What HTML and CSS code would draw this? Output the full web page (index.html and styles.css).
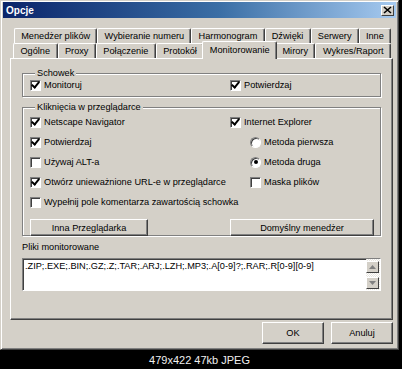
FILE: index.html
```html
<!DOCTYPE html>
<html lang="pl">
<head>
    <meta charset="UTF-8">
    <title>Opcje</title>
    <link rel="stylesheet" href="styles.css">
</head>
<body>
    <div class="frame">
        <div class="dialog">
            <div class="titlebar">
                <span class="title">Opcje</span>
                <span class="close-btn">
                    <svg viewBox="0 0 9 8" width="9" height="8">
                        <path d="M1 1L8 7M8 1L1 7" stroke="#000" stroke-width="1.6" />
                    </svg>
                </span>
            </div>

            <div class="content">
                <div class="tabs">
                    <div class="tab-row back">
                        <div class="tab">Menedżer plików</div>
                        <div class="tab">Wybieranie numeru</div>
                        <div class="tab">Harmonogram</div>
                        <div class="tab">Dźwięki</div>
                        <div class="tab">Serwery</div>
                        <div class="tab">Inne</div>
                    </div>
                    <div class="tab-row front">
                        <div class="tab">Ogólne</div>
                        <div class="tab">Proxy</div>
                        <div class="tab">Połączenie</div>
                        <div class="tab">Protokół</div>
                        <div class="tab active">Monitorowanie</div>
                        <div class="tab">Mirory</div>
                        <div class="tab">Wykres/Raport</div>
                    </div>
                </div>

                <div class="panel">
                    <fieldset class="group clipboard">
                        <legend>Schowek</legend>
                        <div class="grid">
                            <label class="check"><span class="cb checked"></span>Monitoruj</label>
                            <label class="check"><span class="cb checked"></span>Potwierdzaj</label>
                        </div>
                    </fieldset>

                    <fieldset class="group browser">
                        <legend>Kliknięcia w przeglądarce</legend>
                        <div class="grid rows">
                            <label class="check"><span class="cb checked"></span>Netscape Navigator</label>
                            <label class="check"><span class="cb checked"></span>Internet Explorer</label>

                            <label class="check"><span class="cb checked"></span>Potwierdzaj</label>
                            <label class="check indent"><span class="radio"></span>Metoda pierwsza</label>

                            <label class="check"><span class="cb"></span>Używaj ALT-a</label>
                            <label class="check indent"><span class="radio checked"></span>Metoda druga</label>

                            <label class="check"><span class="cb checked"></span>Otwórz unieważnione URL-e w przeglądarce</label>
                            <label class="check indent"><span class="cb"></span>Maska plików</label>

                            <label class="check wide"><span class="cb"></span>Wypełnij pole komentarza zawartością schowka</label>

                            <div class="btn-row">
                                <button class="btn other">Inna Przeglądarka</button>
                                <button class="btn default-mgr">Domyślny menedżer</button>
                            </div>
                        </div>
                    </fieldset>

                    <div class="files-label">Pliki monitorowane</div>
                    <div class="files-box">
                        <div class="files-text">.ZIP;.EXE;.BIN;.GZ;.Z;.TAR;.ARJ;.LZH;.MP3;.A[0-9]?;.RAR;.R[0-9][0-9]</div>
                        <div class="scrollbar">
                            <span class="sb-btn">
                                <svg viewBox="0 0 7 4" width="7" height="4"><path d="M3.5 0L7 4H0z" fill="#808080" /></svg>
                            </span>
                            <span class="sb-btn">
                                <svg viewBox="0 0 7 4" width="7" height="4"><path d="M0 0H7L3.5 4z" fill="#808080" /></svg>
                            </span>
                        </div>
                    </div>
                </div>

                <div class="footer">
                    <button class="btn dlg">OK</button>
                    <button class="btn dlg">Anuluj</button>
                </div>
            </div>
        </div>
        <div class="caption">479x422 47kb JPEG</div>
    </div>
</body>
</html>
```

FILE: styles.css
```css
:root {
    --clr-face: #d4d0c8;
    --clr-light: #ffffff;
    --clr-shadow: #808080;
    --clr-dark: #404040;
    --clr-text: #000000;
}

* {
    margin: 0;
    padding: 0;
    box-sizing: border-box;
}

body {
    background: #000;
    font-family: "Liberation Sans", Arial, sans-serif;
    font-size: 9.2px;
    color: var(--clr-text);
}

.frame {
    width: 402px;
    height: 369px;
    padding-right: 3px;
}

.dialog {
    width: 399px;
    height: 350px;
    background: var(--clr-face);
    border: 1px solid;
    border-color: var(--clr-face) var(--clr-dark) var(--clr-dark) var(--clr-face);
    box-shadow: inset 1px 1px var(--clr-light), inset -1px -1px var(--clr-shadow);
    padding: 1px 2px;
    display: flex;
    flex-direction: column;
}

/* Title bar */
.titlebar {
    height: 16px;
    background: linear-gradient(to right, #0a246a, #3a6ea5 55%, #a6caf0);
    display: flex;
    align-items: center;
    justify-content: space-between;
    padding: 0 2px 0 3px;
}

.title {
    color: #fff;
    font-weight: bold;
    font-size: 10px;
}

.close-btn {
    width: 13px;
    height: 11px;
    background: var(--clr-face);
    border: 1px solid;
    border-color: var(--clr-light) var(--clr-dark) var(--clr-dark) var(--clr-light);
    display: flex;
    align-items: center;
    justify-content: center;
}

.content {
    padding: 10px 3px 0 7px;
}

/* Tabs */
.tab-row {
    display: flex;
    height: 15px;
}

.tab-row.back {
    padding: 0 2px 0 4px;
}

.tab-row.front {
    padding: 0 2px 0 3px;
}

.tab {
    flex: 1 1 auto;
    padding: 0 4px;
    text-align: center;
    line-height: 14px;
    white-space: nowrap;
    border-top: 1px solid var(--clr-light);
    border-left: 1px solid var(--clr-light);
    border-right: 1px solid var(--clr-dark);
    box-shadow: inset -1px 0 var(--clr-shadow);
    border-radius: 2px 2px 0 0;
    background: var(--clr-face);
}

.tab.active {
    position: relative;
    z-index: 1;
    height: 18px;
    margin: -2px -2px 0;
    line-height: 16px;
}

/* Panel */
.panel {
    height: 262px;
    border: 1px solid;
    border-color: var(--clr-light) var(--clr-dark) var(--clr-dark) var(--clr-light);
    box-shadow: inset -1px -1px var(--clr-shadow);
    padding: 9px 11px 0;
}

.group {
    border: 1px solid var(--clr-shadow);
    box-shadow: 1px 1px 0 var(--clr-light), inset 1px 1px 0 var(--clr-light);
    padding: 0 7px;
    min-width: 0;
}

.group legend {
    line-height: 10px;
    padding: 0 2px;
    margin-left: 5px;
    background: var(--clr-face);
}

.clipboard {
    padding-bottom: 4px;
}

.clipboard .grid {
    grid-auto-rows: 14px;
}

.browser {
    margin-top: 5px;
    padding-bottom: 3px;
}

.grid {
    display: grid;
    grid-template-columns: 200px 1fr;
    align-items: center;
}

.grid.rows {
    grid-auto-rows: 20px;
}

.check {
    display: flex;
    align-items: center;
    gap: 3px;
    white-space: nowrap;
}

.check.indent {
    margin-left: 20px;
}

.check.wide {
    grid-column: 1 / -1;
}

.cb,
.radio {
    width: 11px;
    height: 11px;
    flex: none;
    background: #fff;
    border: 1px solid;
    border-color: var(--clr-shadow) var(--clr-light) var(--clr-light) var(--clr-shadow);
    box-shadow: inset 1px 1px var(--clr-dark);
    display: flex;
    align-items: center;
    justify-content: center;
}

.cb.checked::after {
    content: "";
    width: 3px;
    height: 6px;
    border: solid #000;
    border-width: 0 2px 2px 0;
    transform: translate(0, -1px) rotate(40deg);
}

.radio {
    border-radius: 50%;
}

.radio.checked::after {
    content: "";
    width: 4px;
    height: 4px;
    border-radius: 50%;
    background: #000;
}

/* Buttons */
.btn {
    font: inherit;
    color: var(--clr-text);
    background: var(--clr-face);
    border: 1px solid;
    border-color: var(--clr-light) var(--clr-dark) var(--clr-dark) var(--clr-light);
    box-shadow: inset -1px -1px var(--clr-shadow);
}

.btn-row {
    grid-column: 1 / -1;
    display: grid;
    grid-template-columns: 200px 1fr;
    margin-top: 7px;
    align-self: start;
}

.btn-row .btn {
    height: 17px;
}

.btn.other {
    width: 118px;
}

.btn.default-mgr {
    width: 144px;
}

/* Monitored files */
.files-label {
    margin-top: 6px;
    line-height: 10px;
}

.files-box {
    margin-top: 6px;
    height: 33px;
    background: #fff;
    border: 1px solid;
    border-color: var(--clr-shadow) var(--clr-light) var(--clr-light) var(--clr-shadow);
    box-shadow: inset 1px 1px var(--clr-dark);
    display: flex;
}

.files-text {
    flex: 1;
    padding: 2px 2px 0;
    line-height: 11px;
    white-space: nowrap;
}

.scrollbar {
    width: 14px;
    padding: 2px 1px 1px 0;
    display: flex;
    flex-direction: column;
    justify-content: space-between;
    background: repeating-conic-gradient(#fff 0 25%, #e8e6e0 0 50%) 0 0 / 2px 2px;
}

.sb-btn {
    height: 12px;
    background: var(--clr-face);
    border: 1px solid;
    border-color: var(--clr-light) var(--clr-dark) var(--clr-dark) var(--clr-light);
    display: flex;
    align-items: center;
    justify-content: center;
}

/* Dialog buttons */
.footer {
    display: flex;
    justify-content: flex-end;
    gap: 7px;
    padding-top: 2px;
}

.btn.dlg {
    width: 62px;
    height: 22px;
}

.caption {
    height: 19px;
    line-height: 21px;
    text-align: center;
    color: #f0f0f0;
    font-size: 11px;
}
```
